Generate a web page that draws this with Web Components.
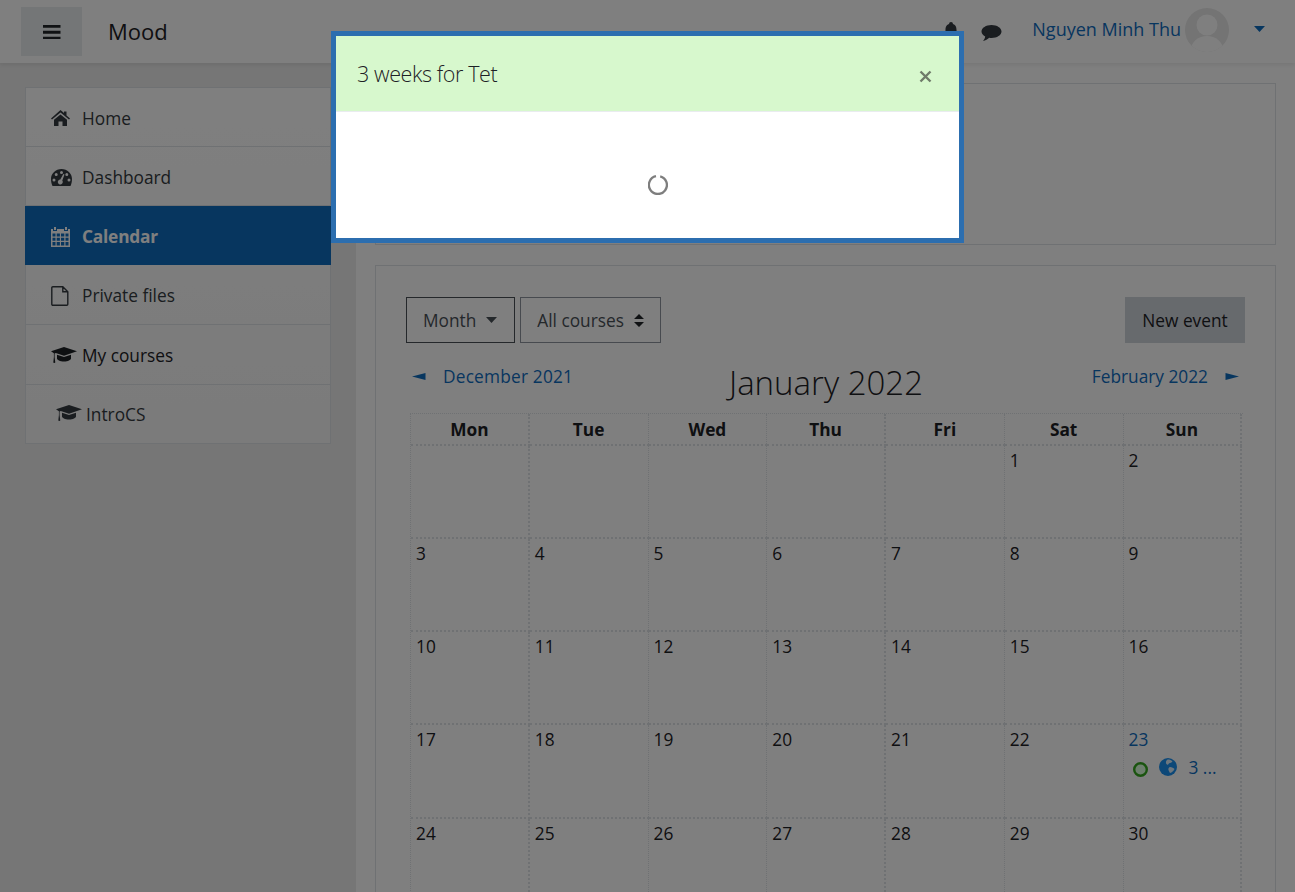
<!DOCTYPE html>
<html><head><meta charset="utf-8">
<style>
html,body{margin:0;padding:0;height:892px;overflow:hidden}
body{background:#f0f0f0;font:18px "Open Sans",sans-serif;color:#1d2125}
</style></head><body>
<template id="t-bar"><style>
:host{display:flex;align-items:center;height:63px;background:#fff;box-shadow:0 2px 4px rgba(0,0,0,.08);padding-left:21px;box-sizing:border-box;position:relative;z-index:1}
.burger{width:61px;height:49px;background:#e9ecef;display:flex;align-items:center;justify-content:center;margin-right:26px}
.brand{font-size:22px;flex:1;color:#1d2125;margin-bottom:2px}
.r{display:flex;align-items:center;color:#343a40}
.name{color:#0f6cbf;font-size:18px;margin:0 4px 0 30px;position:relative;top:-3px;white-space:nowrap}
svg{display:block}
</style>
<div class="burger"><svg width="18" height="14" viewBox="0 0 18 14"><path d="M0 0h17.500v3H0zM0 6h17.500v3H0zM0 12h17.500v2.600H0z" fill="#212529" transform="translate(0 -.3)"/></svg></div>
<div class="brand">Mood</div>
<div class="r">
<svg width="16" height="20" viewBox="0 0 16 20" style="margin-right:22px;margin-top:-2px"><path d="M8 1a2 2 0 0 1 2 2c3 1 3.500 3.500 3.500 6 0 3 1 4 2.500 5.500H0C1.500 13 2.500 12 2.500 9c0-2.500.5-5 3.500-6a2 2 0 0 1 2-2zM5.500 16h5a2.500 2.500 0 0 1-5 0z" fill="#343a40"/></svg>
<svg width="21" height="18" viewBox="0 0 21 18" style="margin-top:3px"><path d="M10.500 1C16 1 20.500 3.900 20.500 7.500S16 14 10.500 14c-.8 0-1.600-.1-2.300-.2C6.700 15.300 4.500 16.400 2 17c1.100-1.200 2-2.700 2.200-4.500C2 11.300.5 9.500.5 7.500.5 3.900 5 1 10.500 1z" fill="#343a40"/></svg>
<span class="name">Nguyen Minh Thu</span>
<svg width="44" height="44" viewBox="0 0 44 44" style="margin-top:-4px"><defs><clipPath id="c"><circle cx="22" cy="22" r="22"/></clipPath></defs><circle cx="22" cy="22" r="22" fill="#e8e8e8"/><g clip-path="url(#c)" fill="#fff"><circle cx="22" cy="17" r="10.500"/><ellipse cx="22" cy="42" rx="16" ry="14"/></g></svg>
<svg width="11" height="6" viewBox="0 0 11 6" style="margin:-6px 30px 0 25px"><path d="M0 0h11L5.500 6z" fill="#0f6cbf"/></svg>
</div></template>

<template id="t-nav"><style>
:host{display:block;width:306px;box-sizing:border-box;background:linear-gradient(#fff,#f6f6f6);border:1px solid #dee2e6;margin:24px 0 0 25px;flex:none;align-self:flex-start}
</style><slot></slot></template>

<template id="t-item"><style>
:host{display:flex;align-items:center;box-sizing:border-box;height:59px;border-bottom:1px solid #dee2e6;padding:2px 0 0 25px;color:#343a40;font-size:17.300px}
:host([tall]){height:60px}
:host(:last-child){border-bottom:0}
:host([active]){background:#0f6cbf;color:#fff;font-weight:700;margin:0 -1px;padding-left:26px;border-bottom:0;letter-spacing:-.2px}
:host([dark]){color:#1d2125}
:host([sub]){padding:0 0 0 30px;height:58px}
.i{width:31px;display:flex;flex:none}
:host([sub]) .i{width:30px}
</style><span class="i"><slot name="i"></slot></span><slot></slot></template>

<template id="t-select"><style>
:host{display:inline-flex;align-items:center;box-sizing:border-box;height:46px;border:1px solid #8f959e;padding:0 15px 0 16px;color:#495057;font-size:17.300px}
:host([dark]){border-color:#4a5056;padding-right:17px}
span{margin-right:10px}
</style><span><slot></slot></span><slot name="i"></slot></template>

<template id="t-card"><style>
:host{display:block;background:#fff;border:1px solid #dee2e6;box-sizing:border-box}
</style><slot></slot></template>

<template id="t-cal"><style>
:host{display:block;padding:31px 30px 0 30px;color:#1d2125}
.tb{display:flex;align-items:center;gap:5px}
.btn{margin-left:auto;width:120px;height:46px;background:#ced4da;color:#1d2125;display:flex;align-items:center;justify-content:center;font-size:17.300px}
.nav{display:flex;justify-content:space-between;height:70px;padding:0 7px 0 6px;position:relative;margin-right:-1px;font-size:17.300px}
a{color:#0f6cbf;display:flex;align-items:center;height:66px}
.title{font-weight:300;font-size:33px;position:absolute;left:0;right:0;text-align:center;top:18px;line-height:44px;pointer-events:none}
.grid{display:grid;grid-template-columns:repeat(7,118.75px);grid-template-rows:32px 93px 93px 93px 94px 93px 93px;margin:0 4px;box-sizing:border-box;border-top:1px dotted #dee2e6;border-left:1px dotted #dee2e6;width:833px}
.h,.d{border-right:1px dotted #dee2e6;border-bottom:2px dotted #dee2e6;box-sizing:border-box}
.t{border-right-width:2px}
.h{font-weight:700;text-align:center;font-size:17.300px;line-height:31px}
.d{padding:2px 5px;font-size:17.300px;line-height:26px}
.l{color:#0f6cbf}
.ev{display:flex;align-items:center;color:#0f6cbf;margin:4px 0 0 4px;height:22px}
</style>
<div class="tb"><r-select dark>Month<svg slot="i" width="11" height="6" viewBox="0 0 11 6"><path d="M0 0h11L5.500 6z" fill="#495057"/></svg></r-select><r-select>All courses<svg slot="i" width="10" height="13" viewBox="0 0 10 13" style="margin-right:1px"><path d="M5 0l5 5H0zM5 13L0 8h10z" fill="#212529"/></svg></r-select><div class="btn">New event</div></div>
<div class="nav"><a style="letter-spacing:.2px"><svg width="14" height="7" viewBox="0 0 14 7" style="margin-right:17px"><path d="M0 3.500L13.500 0v7z" fill="#0f6cbf"/></svg>December 2021</a><div class="title">January 2022</div><a>February 2022<svg width="14" height="7" viewBox="0 0 14 7" style="margin-left:17px"><path d="M14 3.500L.5 0v7z" fill="#0f6cbf"/></svg></a></div>
<div class="grid" id="g"></div></template>

<template id="t-dim"><style>
:host{position:fixed;inset:0;background:rgba(0,0,0,.5);z-index:5;display:block}
</style></template>

<template id="t-modal"><style>
:host{position:fixed;left:331px;top:31px;width:633px;height:212px;box-sizing:border-box;border:5px solid #2c6eaf;background:#fff;z-index:6;display:block}
.hd{height:75px;background:#d7f8cd;border-bottom:1px solid #e9ecef;display:flex;align-items:center;padding:0 27px 0 21px;font-weight:300;font-size:21.500px;letter-spacing:-.4px;color:#1d2125}
.t{flex:1}
.x{margin-top:5px}
.bd{display:flex;justify-content:center;padding:63px 0 0 20px}
</style><div class="hd"><span class="t"><slot></slot></span><svg class="x" width="13" height="13" viewBox="0 0 13 13"><path d="M1.500 1.500l10 10M11.500 1.500l-10 10" stroke="#6f7b6a" stroke-width="2.400"/></svg></div>
<div class="bd"><svg width="20" height="20" viewBox="0 0 20 20"><path d="M12.200 1.300A9 9 0 1 1 8 1.200" fill="none" stroke="#7e7e7e" stroke-width="2.300"/></svg></div></template>

<r-bar></r-bar>
<r-layout>
<r-nav>
<r-item><svg slot="i" width="19" height="16" viewBox="0 0 19 16"><path d="M9.500 0L13 3V1.500h2.500v4L19 8.500l-1 1-8.500-7-8.500 7-1-1zM3 9.800L9.500 4.500 16 9.800V16h-4.500v-4.500h-4V16H3z" fill="#343a40"/></svg>Home</r-item>
<r-item><svg slot="i" width="21" height="17" viewBox="0 0 21 17"><path fill-rule="evenodd" d="M10.500 0C16.300 0 21 4.500 21 10c0 2.700-.6 5-1.500 7h-18C.6 15 0 12.700 0 10 0 4.500 4.700 0 10.500 0zM10.500 2a1.500 1.500 0 1 0 0 3 1.500 1.500 0 0 0 0-3zM5.200 4a1.500 1.500 0 1 0 0 3 1.500 1.500 0 0 0 0-3zM3 9.500a1.500 1.500 0 1 0 0 3 1.500 1.500 0 0 0 0-3zM18 9.500a1.500 1.500 0 1 0 0 3 1.500 1.500 0 0 0 0-3zM15.800 4a1.500 1.500 0 1 0 0 3 1.500 1.500 0 0 0 0-3zM12.300 5L9.300 10.500a2.500 2.500 0 1 0 2 1L13.500 5.500z" fill="#343a40"/></svg>Dashboard</r-item>
<r-item active><svg slot="i" width="19" height="20" viewBox="0 0 19 20"><path fill-rule="evenodd" d="M3 0h2v3H3zM14 0h2v3h-2zM0 2h2v2h4V2h7v2h4V2h2v18H0zM1.500 6.500v3h3v-3zM5.700 6.500v3h3.200v-3zM10 6.500v3h3.300v-3zM14.500 6.500v3h3v-3zM1.500 10.700v3h3v-3zM5.700 10.700v3h3.200v-3zM10 10.700v3h3.300v-3zM14.500 10.700v3h3v-3zM1.500 15v3.500h3V15zM5.700 15v3.500h3.200V15zM10 15v3.500h3.300V15zM14.500 15v3.500h3V15z" fill="#fff"/></svg>Calendar</r-item>
<r-item tall><svg slot="i" width="18" height="20" viewBox="0 0 18 20"><path d="M1.800.8h10l5 5v12.500a1 1 0 0 1-1 1h-14a1 1 0 0 1-1-1V1.800a1 1 0 0 1 1-1zM11.800.8v5h5" fill="none" stroke="#343a40" stroke-width="1.400"/></svg>Private files</r-item>
<r-item tall dark><svg slot="i" width="26" height="18" viewBox="0 0 26 18"><path d="M13 0l13 4.300L13 8.800 4.800 6.100 3.600 6.600v3.500l.7 5.500c0 .6-2 .6-2 0l.6-5.500V6.300L0 4.300zM6 7.700l7 2.400 7-2.400v3.800c0 1.500-3 3-7 3s-7-1.500-7-3z" fill="#1d2125"/></svg>My courses</r-item>
<r-item sub><svg slot="i" width="26" height="18" viewBox="0 0 26 18"><path d="M13 0l13 4.300L13 8.800 4.800 6.100 3.600 6.600v3.500l.7 5.500c0 .6-2 .6-2 0l.6-5.500V6.300L0 4.300zM6 7.700l7 2.400 7-2.400v3.800c0 1.500-3 3-7 3s-7-1.500-7-3z" fill="#343a40"/></svg>IntroCS</r-item>
</r-nav>
<r-main>
<r-card style="height:162px"></r-card>
<r-card style="height:700px;margin-top:20px"><r-cal></r-cal></r-card>
</r-main>
</r-layout>
<r-dim></r-dim>
<r-modal>3 weeks for Tet</r-modal>
<script>
function def(name,tpl,extra){customElements.define(name,class extends HTMLElement{constructor(){super();this.attachShadow({mode:'open'}).appendChild(document.getElementById(tpl).content.cloneNode(true));}connectedCallback(){extra&&extra(this.shadowRoot)}})}
customElements.define('r-layout',class extends HTMLElement{constructor(){super();this.attachShadow({mode:'open'}).innerHTML='<style>:host{display:flex;background:#ececec;height:829px}</style><slot></slot>'}});
customElements.define('r-main',class extends HTMLElement{constructor(){super();this.attachShadow({mode:'open'}).innerHTML='<style>:host{display:block;flex:1;background:#fff;margin-left:25px;padding:20px 19px 0 19px;box-sizing:border-box;min-width:0;overflow:hidden}</style><slot></slot>'}});
def('r-bar','t-bar');def('r-nav','t-nav');def('r-item','t-item');def('r-select','t-select');def('r-card','t-card');def('r-dim','t-dim');def('r-modal','t-modal');
def('r-cal','t-cal',function(s){
 var g=s.getElementById('g');if(g.children.length)return;
 var thick=function(c){return c%7==0||c%7==3||c%7==6?' t':''};
 var h='';['Mon','Tue','Wed','Thu','Fri','Sat','Sun'].forEach(function(d,i){h+='<div class="h'+thick(i)+'">'+d+'</div>'});
 for(var i=0;i<5;i++)h+='<div class="d'+thick(i)+'"></div>';
 for(var n=1;n<=30;n++){var c=(n+4)%7;h+='<div class="d'+thick(c)+'"><span class="'+(n==23?'l':'')+'">'+n+'</span>'+(n==23?'<div class="ev"><svg width="15" height="15" viewBox="0 0 15 15" style="margin-right:11px;margin-top:3px"><circle cx="7.500" cy="7.500" r="6.300" fill="#dcffdc" stroke="#35a81f" stroke-width="2.400"/></svg><svg width="18" height="18" viewBox="0 0 18 18" style="margin-right:12px;margin-top:-2px"><circle cx="9" cy="9" r="9" fill="#1a90f0"/><path d="M8.500 1.500c2.500 0 3.500.5 5 2-1 .5-1 1.500-2.500 1.500S9.500 7.500 8 6.500 6.500 3 8.500 1.500zM11 9c2 0 3.500 1 4.500 2-1 2-2.500 3.500-4.500 4-1-1.500-1-2-1.500-3S10 9 11 9z" fill="#fff" opacity=".85"/></svg>3 ...</div>':'')+'</div>';}
 g.innerHTML=h;
});
</script>
</body></html>
